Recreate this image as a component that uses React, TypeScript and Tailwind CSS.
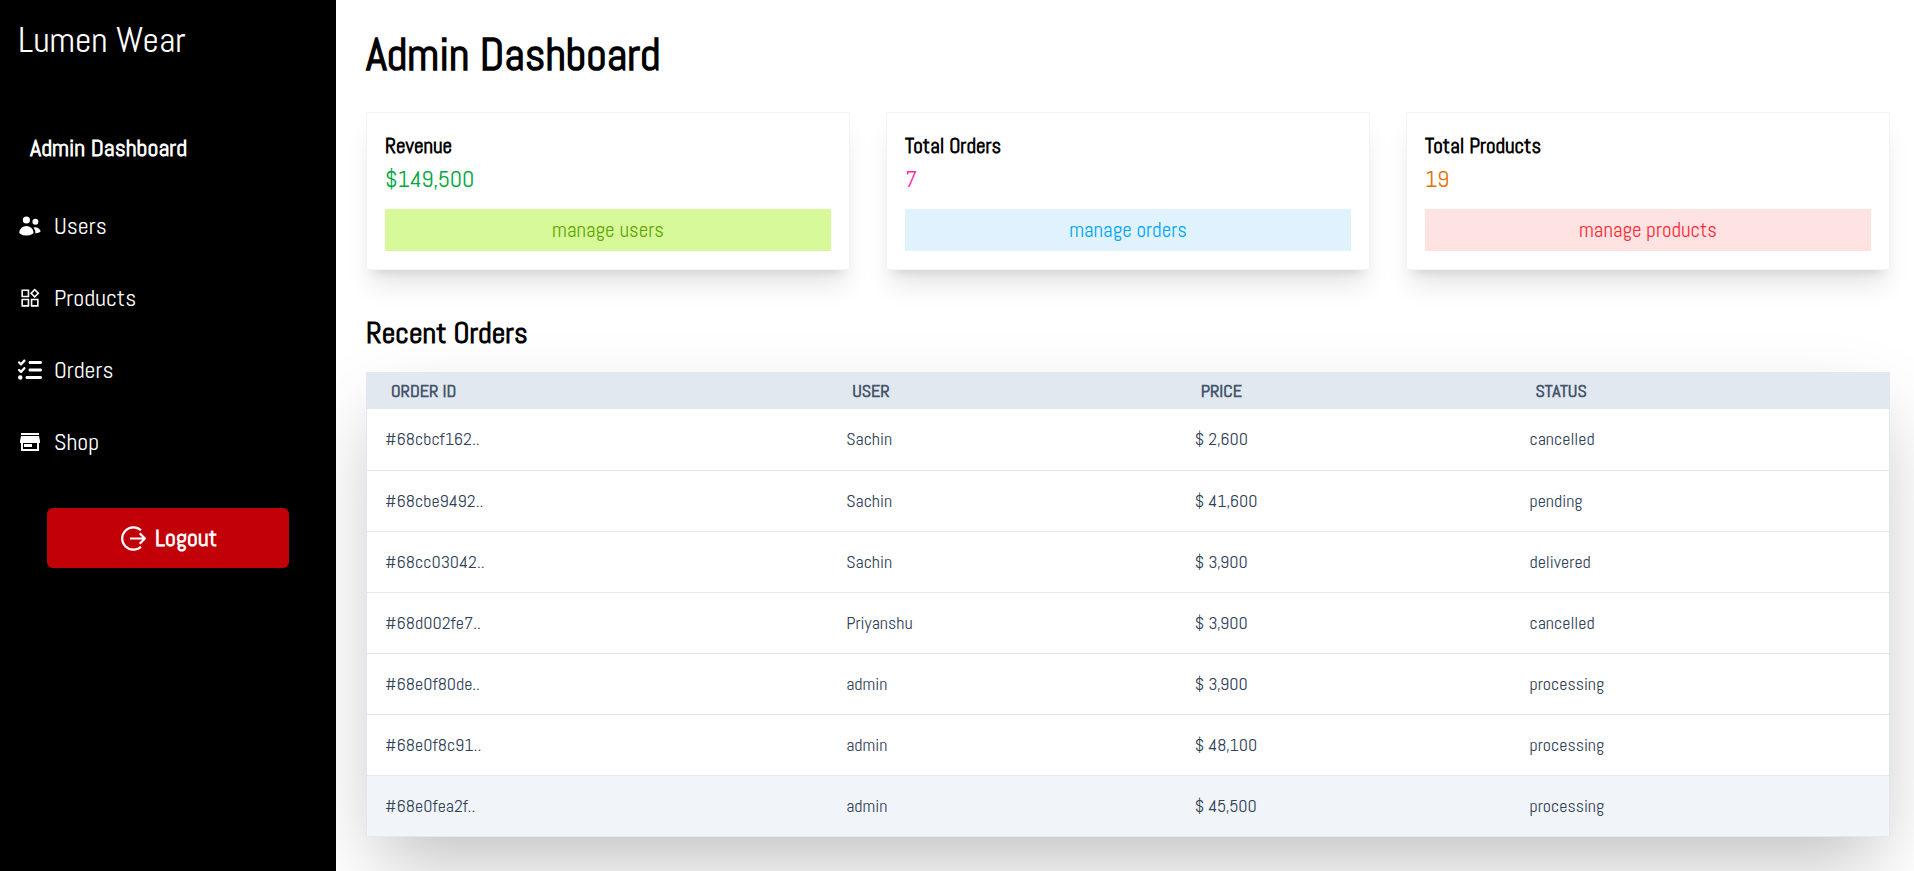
import type { ReactNode } from "react";
import { HiMiniUsers } from "react-icons/hi2";
import { AiOutlineProduct } from "react-icons/ai";
import { FaListCheck } from "react-icons/fa6";

function ShopIcon() {
  return (
    <svg viewBox="0 0 24 24" className="size-6" fill="currentColor" aria-hidden="true">
      <path d="M3 3h18v2H3z" />
      <path d="M3 6h18l1 5v2h-1v8H3v-8H2v-2z M5 13v6h14v-6z" fillRule="evenodd" />
      <path d="M6 14h8v3H6z" />
    </svg>
  );
}

function LogoutIcon() {
  return (
    <svg viewBox="0 0 27 27" className="size-[27px]" fill="none" stroke="currentColor" strokeWidth="2.2" aria-hidden="true">
      <path d="M22 5.300A11.200 11.200 0 1 0 22 21.700" />
      <path d="M10.900 13.500h15M20.700 8.300l5.200 5.200-5.200 5.200" />
    </svg>
  );
}

const links: { label: string; icon: ReactNode }[] = [
  { label: "Users", icon: <HiMiniUsers className="size-6" /> },
  { label: "Products", icon: <AiOutlineProduct className="size-6" /> },
  { label: "Orders", icon: <FaListCheck className="size-6" /> },
  { label: "Shop", icon: <ShopIcon /> },
];

const stats = [
  { title: "Revenue", value: "$149,500", valueColor: "text-green-600", action: "manage users", actionColor: "bg-lime-200 text-lime-600" },
  { title: "Total Orders", value: "7", valueColor: "text-pink-500", action: "manage orders", actionColor: "bg-sky-100 text-sky-500" },
  { title: "Total Products", value: "19", valueColor: "text-amber-600", action: "manage products", actionColor: "bg-red-100 text-red-500" },
];

const orders = [
  ["#68cbcf162..", "Sachin", "$ 2,600", "cancelled"],
  ["#68cbe9492..", "Sachin", "$ 41,600", "pending"],
  ["#68cc03042..", "Sachin", "$ 3,900", "delivered"],
  ["#68d002fe7..", "Priyanshu", "$ 3,900", "cancelled"],
  ["#68e0f80de..", "admin", "$ 3,900", "processing"],
  ["#68e0f8c91..", "admin", "$ 48,100", "processing"],
  ["#68e0fea2f..", "admin", "$ 45,500", "processing"],
];

export default function App() {
  return (
    <div className="flex min-h-screen overflow-hidden bg-white font-['Abel','Roboto_Condensed','Liberation_Sans',sans-serif] text-black">
      <aside className="relative z-10 w-[336px] shrink-0 bg-black text-white">
        <p className="px-[18px] pt-[18px] text-[36px] leading-[44px]">Lumen Wear</p>
        <h2 className="mt-[68px] px-[30px] text-[24px] leading-9 font-bold">Admin Dashboard</h2>
        <nav className="mt-6 flex flex-col">
          {links.map((link) => (
            <a key={link.label} href="#" className="flex h-[72px] items-center gap-3 px-[18px] text-[24px] leading-9">
              {link.icon}
              {link.label}
            </a>
          ))}
        </nav>
        <div className="px-[47px] pt-[30px]">
          <button type="button" className="flex h-[60px] w-full items-center justify-center gap-[9px] rounded-md bg-red-700 text-[24px] font-bold">
            <LogoutIcon />
            Logout
          </button>
        </div>
      </aside>

      <main className="min-w-0 flex-1 pr-6 pl-[30px]">
        <h1 className="pt-[30px] text-[45px] leading-[50px] font-bold">Admin Dashboard</h1>
        <section className="mt-8 grid grid-cols-3 gap-9">
          {stats.map((stat) => (
            <article key={stat.title} className="border border-gray-100 bg-white p-[18px] shadow-xl">
              <h3 className="text-[21px] leading-[30px] font-bold">{stat.title}</h3>
              <p className={`text-[24px] leading-9 ${stat.valueColor}`}>{stat.value}</p>
              <button type="button" className={`mt-3 block h-[42px] w-full text-[21px] ${stat.actionColor}`}>
                {stat.action}
              </button>
            </article>
          ))}
        </section>

        <h2 className="mt-[45px] text-[30px] leading-9 font-bold">Recent Orders</h2>
        <div className="mt-[21px] border border-slate-200 bg-white shadow-[0_35px_75px_-12px_rgba(0,0,0,0.26)]">
          <table className="w-full table-fixed border-collapse text-left text-[18px] leading-6">
            <colgroup>
              <col className="w-[30.3%]" />
              <col className="w-[22.9%]" />
              <col className="w-[22%]" />
              <col />
            </colgroup>
            <thead className="bg-slate-200 text-slate-600">
              <tr className="h-9">
                <th className="px-6">ORDER ID</th>
                <th className="px-6">USER</th>
                <th className="px-6">PRICE</th>
                <th className="px-6">STATUS</th>
              </tr>
            </thead>
            <tbody className="text-slate-700">
              {orders.map((order) => (
                <tr key={order[0]} className="h-[61px] border-b border-slate-200 last:border-b-0 last:bg-slate-100">
                  {order.map((cell, i) => (
                    <td key={i} className="px-[18px]">{cell}</td>
                  ))}
                </tr>
              ))}
            </tbody>
          </table>
        </div>
      </main>
    </div>
  );
}
